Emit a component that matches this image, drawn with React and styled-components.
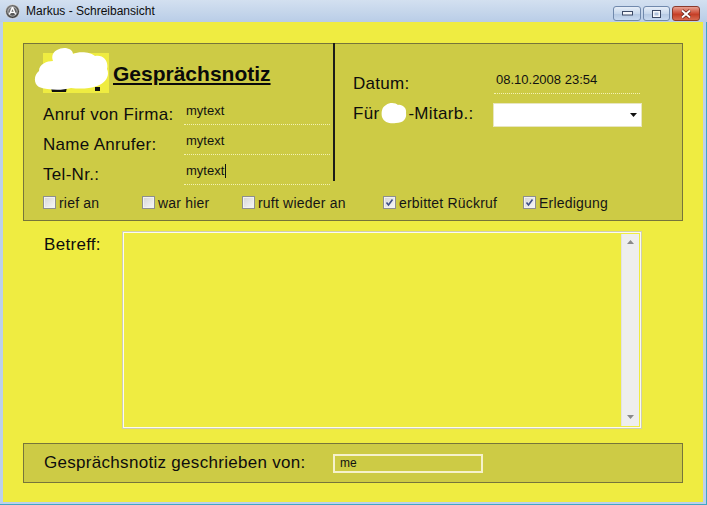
import styled, { createGlobalStyle } from "styled-components";

const GlobalStyle = createGlobalStyle`
  html, body { margin: 0; padding: 0; background: #ffffff; }
  body { font-family: "Liberation Sans", Arial, sans-serif; color: #111; }
`;

const YELLOW = "#efec41";
const OLIVE = "#cdcb45";

const Window = styled.div`
  width: 707px;
  height: 505px;
  display: flex;
  flex-direction: column;
  overflow: hidden;
  background: #bcd0ea;
  box-shadow: inset -1px -1px 0 #3fa6c4;
`;

const TitleBar = styled.div`
  height: 22px;
  flex: none;
  display: flex;
  align-items: center;
  padding: 0 7px 0 5px;
  box-sizing: border-box;
  background: linear-gradient(#d3e0f0, #b9cde7);
`;

const TitleText = styled.span`
  margin-left: 6px;
  font-family: "Liberation Sans", Arial, sans-serif;
  font-size: 12px;
  color: #0c0c0c;
`;

const TitleButtons = styled.div`
  margin-left: auto;
  align-self: flex-start;
  margin-top: 6px;
  display: flex;
  gap: 2px;
`;

const CaptionButton = styled.div`
  width: ${p => p.$w}px;
  height: 15px;
  box-sizing: border-box;
  border: 1px solid ${p => (p.$close ? "#8a3a2c" : "#7089ac")};
  border-radius: 3px;
  display: flex;
  align-items: center;
  justify-content: center;
  background: ${p =>
    p.$close
      ? "linear-gradient(#e8a090, #cc4a34 50%, #c23a22 52%, #d86a50)"
      : "linear-gradient(#e6eef8, #c8d8ec 50%, #b4c8e2 52%, #c8daf0)"};
`;

const Content = styled.div`
  flex: 1;
  margin: 0 4px 3px 3px;
  background: ${YELLOW};
  display: flex;
  flex-direction: column;
`;

const Panel = styled.div`
  margin: ${p => p.$mt}px 0 0 20px;
  width: 660px;
  height: ${p => p.$h}px;
  box-sizing: border-box;
  background: ${OLIVE};
  border: 1px solid #77753a;
  flex: none;
`;

const Upper = styled.div`
  display: flex;
  height: 141px;
`;

const LeftCol = styled.div`
  width: 309px;
  display: flex;
  flex-direction: column;
`;

const Separator = styled.div`
  width: 2px;
  height: 138px;
  margin-top: -1px;
  background: #1d1d18;
`;

const RightCol = styled.div`
  flex: 1;
  padding: 20px 0 0 18px;
`;

const Header = styled.div`
  height: 51px;
  display: flex;
  align-items: flex-start;
  padding-left: 9px;
`;

const Logo = styled.svg`
  margin-top: 3px;
  flex: none;
`;

const Heading = styled.span`
  margin: 18px 0 0 4px;
  font-size: 21px;
  line-height: 24px;
  font-weight: bold;
  text-decoration: underline;
  text-underline-offset: 2px;
  color: #0a0a0a;
`;

const FieldRow = styled.div`
  display: grid;
  grid-template-columns: 141px 146px;
  align-items: end;
  height: ${p => p.$h || 30}px;
  padding-left: ${p => p.$pl ?? 19}px;
`;

const Label = styled.span`
  font-size: 17px;
  letter-spacing: 0.3px;
  line-height: 19px;
  margin-bottom: 1px;
  white-space: nowrap;
  display: flex;
  align-items: center;
  color: #0d0d0d;
`;

const Value = styled.div`
  font-size: 13px;
  line-height: 15px;
  padding: 0 0 6px 2px;
  border-bottom: 1px dotted #f3f1b4;
  display: flex;
  align-items: center;
`;

const Caret = styled.span`
  display: inline-block;
  width: 1px;
  height: 14px;
  margin-left: 1px;
  background: #111;
`;

const Redact = styled.svg`
  margin: 0 1px 0 2px;
`;

const Select = styled.div`
  width: 149px;
  height: 24px;
  margin: 0 0 -2px -1px;
  box-sizing: border-box;
  background: #ffffff;
  border: 1px solid #e8e6c0;
  display: flex;
  align-items: center;
  justify-content: flex-end;
  padding-right: 4px;
`;

const CheckRow = styled.div`
  height: 35px;
  display: grid;
  grid-template-columns: 99px 100px 141px 140px auto;
  align-items: center;
  padding-left: 19px;
`;

const CheckItem = styled.label`
  display: flex;
  align-items: center;
  gap: 3px;
  font-size: 14px;
  letter-spacing: 0.2px;
  color: #151515;
`;

const Box = styled.span`
  width: 13px;
  height: 13px;
  box-sizing: border-box;
  border: 1px solid #8e8f8f;
  background: linear-gradient(135deg, #d6d6d6, #f7f7f7);
  box-shadow: inset 0 0 0 1px #f2f2f2;
  display: flex;
  align-items: center;
  justify-content: center;
`;

const Lower = styled.div`
  margin-top: 10px;
  display: flex;
  height: 198px;
  flex: none;
`;

const SubjectLabel = styled.span`
  width: 79px;
  padding: 4px 0 0 41px;
  font-size: 17px;
  letter-spacing: 0.3px;
  line-height: 19px;
  color: #0d0d0d;
`;

const TextArea = styled.div`
  width: 520px;
  height: 198px;
  margin-left: -1px;
  box-sizing: border-box;
  border: 1px solid #cfcdb0;
  box-shadow: inset 0 0 0 1px #fbfbf0;
  background: ${YELLOW};
  display: flex;
  justify-content: flex-end;
  padding: 2px;
`;

const Scrollbar = styled.div`
  width: 17px;
  background: #eeeeee;
  border-left: 1px solid #e2e2e2;
  display: flex;
  flex-direction: column;
  justify-content: space-between;
  align-items: center;
  padding: 6px 0 7px;
`;

const FooterRow = styled.div`
  height: 100%;
  display: grid;
  grid-template-columns: 289px 150px;
  align-items: center;
  padding-left: 20px;
`;

const SmallInput = styled.div`
  height: 19px;
  box-sizing: border-box;
  border: 2px solid #f6f2cc;
  background: ${OLIVE};
  font-size: 12px;
  line-height: 15px;
  padding-left: 5px;
  margin-top: 1px;
`;

const Arrow = ({ up, color = "#8a8a8a", w = 7 }) => (
  <svg width={w} height={4} viewBox="0 0 7 4">
    <path d={up ? "M0 4 L3.5 0 L7 4 Z" : "M0 0 L7 0 L3.5 4 Z"} fill={color} />
  </svg>
);

const CheckMark = () => (
  <svg width="9" height="9" viewBox="0 0 9 9">
    <path d="M1.5 4.5 L3.5 7 L7.5 1.5" fill="none" stroke="#3e4f86" strokeWidth="1.6" />
  </svg>
);

const checks = [
  { label: "rief an", checked: false },
  { label: "war hier", checked: false },
  { label: "ruft wieder an", checked: false },
  { label: "erbittet Rückruf", checked: true },
  { label: "Erledigung", checked: true },
];

export default function App() {
  return (
    <>
      <GlobalStyle />
      <Window>
        <TitleBar>
          <svg width="15" height="15" viewBox="0 0 15 15">
            <defs>
              <radialGradient id="ic" cx="0.4" cy="0.3" r="0.8">
                <stop offset="0" stopColor="#8a8a8a" />
                <stop offset="1" stopColor="#2b2b2b" />
              </radialGradient>
            </defs>
            <circle cx="7.5" cy="7.5" r="7" fill="url(#ic)" stroke="#e8e8e8" strokeWidth="0.8" />
            <circle cx="7.5" cy="7.5" r="4.6" fill="none" stroke="#dcdcdc" strokeWidth="0.7" />
            <path d="M7.5 3.2 L10.6 10.6 M7.5 3.2 L4.4 10.6 M5.6 8.4 L9.4 8.4" stroke="#ffffff" strokeWidth="1.4" fill="none" />
          </svg>
          <TitleText>Markus - Schreibansicht</TitleText>
          <TitleButtons>
            <CaptionButton $w={28}>
              <svg width="11" height="5" viewBox="0 0 11 5">
                <rect x="0.5" y="0.5" width="10" height="3.5" fill="#f4f6fa" stroke="#3c4a66" />
              </svg>
            </CaptionButton>
            <CaptionButton $w={27}>
              <svg width="9" height="8" viewBox="0 0 9 8">
                <rect x="0.5" y="0.5" width="8" height="7" fill="#f4f6fa" stroke="#3c4a66" />
                <rect x="2.5" y="2.5" width="4" height="3" fill="#b0c2dc" />
              </svg>
            </CaptionButton>
            <CaptionButton $w={28} $close>
              <svg width="12" height="10" viewBox="0 0 12 10">
                <path d="M2 1.5 L10 8.5 M10 1.5 L2 8.5" stroke="#5a1a10" strokeWidth="3.4" />
                <path d="M2 1.5 L10 8.5 M10 1.5 L2 8.5" stroke="#ffffff" strokeWidth="2" />
              </svg>
            </CaptionButton>
          </TitleButtons>
        </TitleBar>

        <Content>
          <Panel $mt={21} $h={178}>
            <Upper>
              <LeftCol>
                <Header>
                  <Logo width="76" height="46" viewBox="0 0 76 46">
                    <rect x="10" y="6" width="66" height="40" fill={YELLOW} />
                    <path d="M18 41 L34 40 L33 45 L19 45 Z" fill="#111" />
                    <rect x="62" y="40" width="5" height="4" fill="#111" />
                    <path
                      d="M24 3 C30 -1 40 1 40 7 C46 4 58 5 62 9 C70 7 76 14 74 22 C77 28 73 36 64 39 C56 42 46 42 38 41 C28 44 14 43 6 40 C0 36 1 28 6 24 C6 17 14 14 20 14 C18 9 20 5 24 3 Z"
                      fill="#ffffff"
                    />
                  </Logo>
                  <Heading>Gesprächsnotiz</Heading>
                </Header>
                <FieldRow>
                  <Label>Anruf von Firma:</Label>
                  <Value>mytext</Value>
                </FieldRow>
                <FieldRow>
                  <Label>Name Anrufer:</Label>
                  <Value>mytext</Value>
                </FieldRow>
                <FieldRow>
                  <Label>Tel-Nr.:</Label>
                  <Value>
                    mytext<Caret />
                  </Value>
                </FieldRow>
              </LeftCol>
              <Separator />
              <RightCol>
                <FieldRow $pl={0}>
                  <Label>Datum:</Label>
                  <Value>08.10.2008 23:54</Value>
                </FieldRow>
                <FieldRow $pl={0} $h={31}>
                  <Label>
                    Für
                    <Redact width="26" height="22" viewBox="0 0 26 22">
                      <path
                        d="M5 3 C9 0 15 1 17 3 C21 2 26 6 25 11 C26 17 22 21 15 21 C10 22 3 21 1 15 C0 10 1 5 5 3 Z"
                        fill="#ffffff"
                      />
                    </Redact>
                    -Mitarb.:
                  </Label>
                  <Select>
                    <Arrow color="#111" />
                  </Select>
                </FieldRow>
              </RightCol>
            </Upper>
            <CheckRow>
              {checks.map(c => (
                <CheckItem key={c.label}>
                  <Box>{c.checked && <CheckMark />}</Box>
                  {c.label}
                </CheckItem>
              ))}
            </CheckRow>
          </Panel>

          <Lower>
            <SubjectLabel>Betreff:</SubjectLabel>
            <TextArea>
              <Scrollbar>
                <Arrow up />
                <Arrow />
              </Scrollbar>
            </TextArea>
          </Lower>

          <Panel $mt={14} $h={40}>
            <FooterRow>
              <Label>Gesprächsnotiz geschrieben von:</Label>
              <SmallInput>me</SmallInput>
            </FooterRow>
          </Panel>
        </Content>
      </Window>
    </>
  );
}
